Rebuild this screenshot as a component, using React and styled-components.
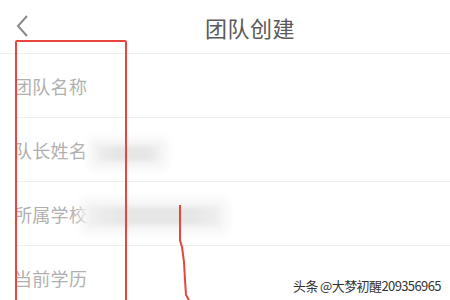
import styled, { createGlobalStyle } from "styled-components";

const Global = createGlobalStyle`
  html, body {
    margin: 0;
    padding: 0;
    background: #fff;
    overflow: hidden;
  }
  body {
    font-family: "Noto Sans CJK SC", "Noto Sans", sans-serif;
  }
`;

const Page = styled.div`
  position: relative;
  width: 450px;
  height: 300px;
  overflow: hidden;
  background: #fff;
`;

const Header = styled.div`
  height: 53px;
  display: flex;
  align-items: center;
  justify-content: center;
  position: relative;
  border-bottom: 1px solid #eeeeee;
`;

const Back = styled.svg`
  position: absolute;
  left: 14px;
  top: 14px;
`;

const Title = styled.h1`
  margin: 0 0 0 50px;
  font-size: 22px;
  font-weight: 400;
  color: #5a5a5a;
  letter-spacing: 0.5px;
`;

const List = styled.div`
  padding-left: 15px;
`;

const Row = styled.div`
  height: 63px;
  display: flex;
  align-items: center;
  border-bottom: 1px solid #efefef;
`;

const Label = styled.span`
  font-size: 18px;
  color: #b0b0b0;
  margin-left: -1px;
  letter-spacing: 0.3px;
`;

const Blur = styled.div`
  height: ${(p) => p.h}px;
  width: ${(p) => p.w}px;
  margin-top: ${(p) => p.mt || 0}px;
  margin-left: ${(p) => p.ml || 0}px;
  background: linear-gradient(90deg, #efefef 0%, #e6e6e6 30%, #e6e6e6 80%, #efefef 100%);
  filter: blur(2px);
  box-shadow: 0 0 10px 8px #f4f4f4;
`;

const RedBox = styled.div`
  position: absolute;
  left: 15px;
  top: 40px;
  width: 108px;
  height: 270px;
  border: 2px solid #e8453c;
  border-radius: 2px;
`;

const Squiggle = styled.svg`
  position: absolute;
  left: 0;
  top: 0;
  pointer-events: none;
`;

const Watermark = styled.div`
  position: absolute;
  left: 293px;
  top: 276px;
  font-size: 13px;
  color: #333;
  letter-spacing: -0.6px;
  text-shadow: 0 0 2px #fff, 0 0 1px #fff;
`;

export default function App() {
  return (
    <Page>
      <Global />
      <Header>
        <Back width="16" height="24" viewBox="0 0 16 24">
          <path d="M13 2 L4 12 L13 22" fill="none" stroke="#8a8a8a" strokeWidth="2" />
        </Back>
        <Title>团队创建</Title>
      </Header>
      <List>
        <Row>
          <Label>团队名称</Label>
        </Row>
        <Row>
          <Label>队长姓名</Label>
          <Blur w={62} h={15} mt={8} ml={10} />
        </Row>
        <Row>
          <Label>所属学校</Label>
          <Blur w={130} h={18} mt={4} ml={2} />
        </Row>
        <Row>
          <Label>当前学历</Label>
        </Row>
      </List>
      <RedBox />
      <Squiggle width="450" height="300">
        <path
          d="M180 205 L180 240 L182 247 L184 262 L185 280 L186 295 L189 300"
          fill="none"
          stroke="#e8453c"
          strokeWidth="2"
        />
      </Squiggle>
      <Watermark>头条 @大梦初醒209356965</Watermark>
    </Page>
  );
}
